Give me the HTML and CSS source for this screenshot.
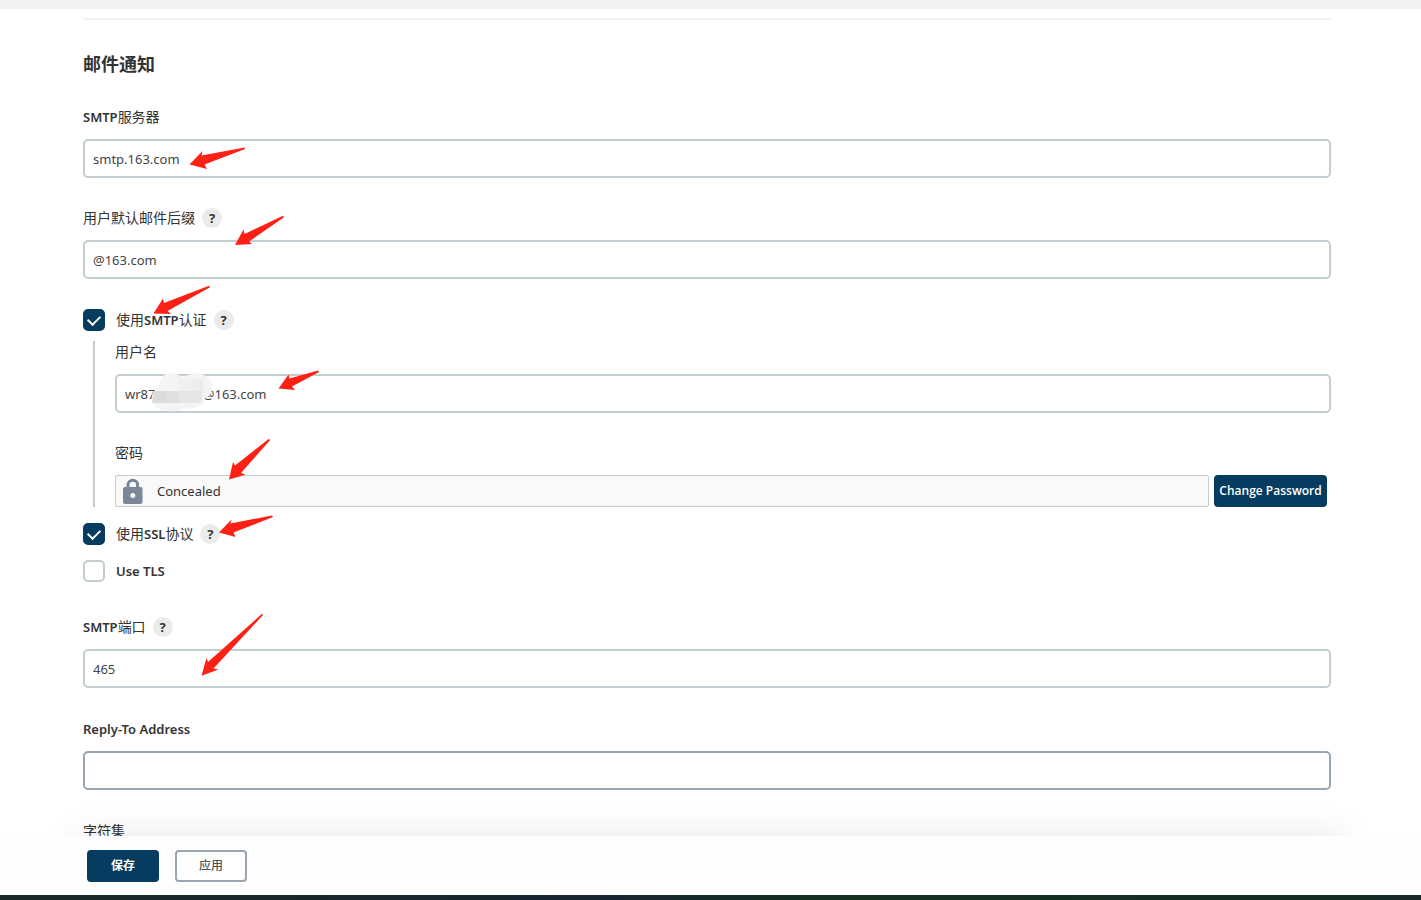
FILE: index.html
```html
<!DOCTYPE html>
<html lang="zh-CN">
<head>
  <meta charset="UTF-8" />
  <meta name="viewport" content="width=device-width, initial-scale=1.0" />
  <title>邮件通知</title>
  <link rel="stylesheet" href="styles.css">
</head>
<body>
  <main class="config">
    <div class="top-bar"></div>

    <form id="config-form" class="config-form">
      <hr class="divider">
      <h2 class="section-title">邮件通知</h2>

      <div class="field">
        <div class="field-label"><label for="smtp-host"><span class="latin">SMTP</span>服务器</label></div>
        <input class="text-input" id="smtp-host" type="text" value="smtp.163.com">
      </div>

      <div class="field">
        <div class="field-label">
          <label for="suffix">用户默认邮件后缀</label>
          <button type="button" class="help">?</button>
        </div>
        <input class="text-input" id="suffix" type="text" value="@163.com">
      </div>

      <div class="check-row">
        <input class="checkbox" id="use-auth" type="checkbox" checked>
        <label for="use-auth">使用<span class="latin">SMTP</span>认证</label>
        <button type="button" class="help">?</button>
      </div>

      <!-- Autenticación SMTP -->
      <div class="auth-group">
        <div class="field">
          <div class="field-label"><label for="username">用户名</label></div>
          <div class="masked">
            <input class="text-input" id="username" type="text" value="wr87              @163.com">
            <svg class="mosaic" width="62" height="40" viewBox="0 0 62 40" aria-hidden="true">
              <path fill="#f3f4f6" d="M7 14C9 4 14 0 20 0c5 0 9 3 12 4 7-3 15-5 21-2 6 3 9 8 8 15-1 6-4 7-7 8-1 6-5 9-11 10-7 0-12 1-17 3-8 1-17 0-21-4-5-5-7-13 2-20z"/>
              <path fill="#e6e6e8" d="M3 18h48v9l-3 3H1z"/>
              <path fill="#dcdcdc" d="M3 18h13v12H1z"/>
              <path fill="#e0e0e0" d="M16 18h12v12H16z"/>
              <path fill="#ececee" d="M40 6h12v12H40z"/>
              <path fill="#f0f0f2" d="M28 6h12v12H28z"/>
            </svg>
          </div>
        </div>
        <div class="field">
          <div class="field-label"><span>密码</span></div>
          <div class="password-row">
            <div class="concealed">
              <svg width="20" height="26" viewBox="0 0 20 26" aria-hidden="true">
                <path fill="none" stroke="#7a8799" stroke-width="3" d="M5 10V7a4.800 4.800 0 0 1 9.600 0V10"/>
                <path fill="#7a8799" fill-rule="evenodd" d="M2 9h15.500A2 2 0 0 1 19.500 11v13a2 2 0 0 1-2 2H2a2 2 0 0 1-2-2V11a2 2 0 0 1 2-2zM9.800 15a2.500 2.500 0 1 0 0 5 2.500 2.500 0 0 0 0-5z"/>
              </svg>
              <span>Concealed</span>
            </div>
            <button type="button" class="btn btn-primary btn-password">Change Password</button>
          </div>
        </div>
      </div>

      <div class="check-row">
        <input class="checkbox" id="use-ssl" type="checkbox" checked>
        <label for="use-ssl">使用<span class="latin">SSL</span>协议</label>
        <button type="button" class="help">?</button>
      </div>
      <div class="check-row">
        <input class="checkbox" id="use-tls" type="checkbox">
        <label for="use-tls"><span class="latin">Use TLS</span></label>
      </div>

      <div class="field field-port">
        <div class="field-label">
          <label for="port"><span class="latin">SMTP</span>端口</label>
          <button type="button" class="help">?</button>
        </div>
        <input class="text-input" id="port" type="text" value="465">
      </div>

      <div class="field field-reply">
        <div class="field-label"><label for="reply-to"><span class="latin">Reply-To Address</span></label></div>
        <input class="text-input is-active" id="reply-to" type="text">
      </div>

      <div class="field">
        <div class="field-label"><label for="charset">字符集</label></div>
        <input class="text-input" id="charset" type="text" value="UTF-8">
      </div>
    </form>

    <!-- Flechas rojas sobre el formulario -->
    <svg class="arrows" width="340" height="700" viewBox="0 0 340 700" aria-hidden="true">
      <path d="M189.500 164.500L202.500 151 201.500 155.500 244.500 147.500 245 149 204.500 164.500 207 169z"/>
      <path d="M235 245L243.500 229.500 244.500 234 283 215.800 284 217.200 249 241.500 252 244z"/>
      <path d="M153.500 313.500L163 298.500 164 303 209 285.800 210 287.200 167.500 311 171 314z"/>
      <path d="M278.500 388.500L288.500 374.500 289.500 378.500 318 370.500 319 372 292 386.500 295 390z"/>
      <path d="M229 479.500L233 462 235 465.500 269 438.800 270 440.200 241 473 245.500 474.800z"/>
      <path d="M219 532.500L231.500 519.500 230.500 523.500 272 515.500 273 517 233.500 532.500 235.500 537z"/>
      <path d="M201.500 675.800L206.500 658 208 662 262 613.800 263 615 213.500 668.500 218.500 669.500z"/>
    </svg>
  </main>

  <footer class="save-bar">
    <button type="submit" form="config-form" class="btn btn-primary">保存</button>
    <button type="button" class="btn btn-outline">应用</button>
  </footer>
  <div class="taskbar"></div>
</body>
</html>
```
FILE: styles.css
```css
* {
  box-sizing: border-box;
}
body {
  display: flex;
  flex-direction: column;
  height: 100vh;
  margin: 0;
  background: #fff;
  color: #333;
  font-family: "Noto Sans", "Noto Sans CJK SC", sans-serif;
  font-size: 14px;
  line-height: 20px;
}
input, button {
  font-family: inherit;
  margin: 0;
}
.config {
  position: relative;
  flex: 1;
  min-height: 0;
  overflow-y: auto;
  scrollbar-width: none;
}
.top-bar {
  height: 9px;
  background: #f2f2f2;
}
.config-form {
  padding: 9px 90px 40px 83px;
}
.divider {
  height: 2px;
  margin: 0;
  border: 0;
  background: #f2f2f2;
}
.section-title {
  margin: 32px 0 31px;
  font-size: 18px;
  line-height: 24px;
  font-weight: 700;
}
.latin {
  font-family: "Noto Sans", sans-serif;
  font-size: 13px;
  font-weight: 600;
}

/* Campos */
.field {
  margin-bottom: 30px;
}
.field-label {
  display: flex;
  align-items: center;
  gap: 7px;
  height: 20px;
  margin-bottom: 12px;
}
.text-input {
  display: block;
  width: 100%;
  height: 39px;
  padding: 0 8px;
  border: 2px solid #c3cdd1;
  border-radius: 5px;
  background: #fff;
  color: #444;
  font-size: 13px;
  outline: none;
}
.text-input.is-active {
  border-color: #98a6b3;
}
.help {
  width: 20px;
  height: 20px;
  padding: 0;
  border: 0;
  border-radius: 50%;
  background: #ebebeb;
  color: #333;
  font-size: 13px;
  line-height: 20px;
  font-weight: 700;
}

/* Casillas */
.check-row {
  display: flex;
  align-items: center;
  gap: 7px;
  height: 22px;
  margin-bottom: 15px;
}
.checkbox {
  appearance: none;
  display: grid;
  place-items: center;
  width: 22px;
  height: 22px;
  margin-right: 4px;
  border: 2px solid #c3cdd1;
  border-radius: 5px;
  background: #fff;
}
.checkbox:checked {
  border-color: #063c5f;
  background: #063c5f;
}
.checkbox:checked::before {
  content: "";
  width: 10px;
  height: 6px;
  margin-bottom: 3px;
  border: solid #fff;
  border-width: 0 0 2px 2px;
  transform: rotate(-45deg);
}
.auth-group {
  margin: -5px 0 16px 10px;
  padding: 1px 0 0 20px;
  border-left: 2px solid #c3cdd1;
}
.auth-group .field:last-child {
  margin-bottom: 0;
}
.masked {
  position: relative;
}
.mosaic {
  position: absolute;
  left: 36px;
  top: -1px;
}
.password-row {
  display: flex;
  gap: 5px;
  margin-right: 4px;
}
.concealed {
  display: flex;
  flex: 1;
  align-items: center;
  gap: 14px;
  height: 32px;
  padding: 0 7px;
  border: 1px solid #c3cdd1;
  border-radius: 2px;
  background: #f9f9f9;
  font-size: 13px;
}
.field-port {
  margin-top: 35px;
}
.field-port,
.field-reply {
  margin-bottom: 31px;
}
.arrows {
  position: absolute;
  left: 0;
  top: 0;
  fill: #ff2015;
  pointer-events: none;
}

/* Botones */
.btn {
  width: 72px;
  height: 32px;
  padding: 0;
  border: 2px solid #98a6b3;
  border-radius: 4px;
  background: #fff;
  color: #4d545d;
  font-size: 12px;
  line-height: 16px;
  font-weight: 500;
}
.btn-primary {
  border-color: #063c5f;
  background: #063c5f;
  color: #fff;
  font-weight: 700;
}
.btn-password {
  width: 113px;
  font-family: "Open Sans", sans-serif;
  font-weight: 600;
}
.save-bar {
  position: relative;
  z-index: 1;
  display: flex;
  gap: 16px;
  padding: 14px 87px 13px;
  background: #fefefe;
}
/* sombra encima de la barra */
.save-bar::before {
  content: "";
  position: absolute;
  inset: 0 78px;
  z-index: -1;
  box-shadow: 0 0 36px rgba(0,0,0,0.1);
  clip-path: inset(-40px -40px 100% -40px);
}
.taskbar {
  height: 5px;
  background: linear-gradient(90deg, #172a27, #172632 42%, #14301f 60%, #172a27);
}
```
